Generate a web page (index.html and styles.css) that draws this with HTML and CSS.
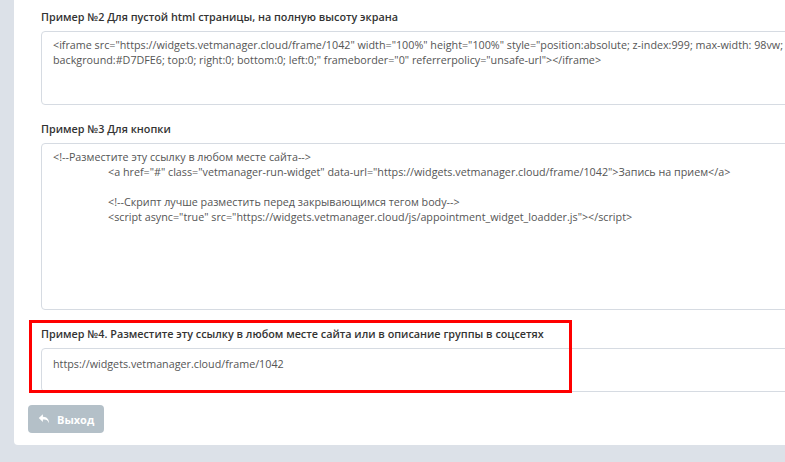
FILE: index.html
```html
<!DOCTYPE html>
<html lang="ru">
  <head>
    <meta charset="UTF-8" />
    <meta name="viewport" content="width=device-width, initial-scale=1.0" />
    <title>Виджет записи</title>
    <link rel="stylesheet" href="styles.css">
  </head>
  <body>
    <div class="page">
      <div class="panel">
        <div class="group">
          <label>Пример №2 Для пустой html страницы, на полную высоту экрана</label>
          <textarea class="code code-sm" readonly>&lt;iframe src="https://widgets.vetmanager.cloud/frame/1042" width="100%" height="100%" style="position:absolute; z-index:999; max-width: 98vw; background:#D7DFE6; top:0; right:0; bottom:0; left:0;" frameborder="0" referrerpolicy="unsafe-url"&gt;&lt;/iframe&gt;</textarea>
        </div>

        <div class="group">
          <label>Пример №3 Для кнопки</label>
          <textarea class="code code-lg" readonly>&lt;!--Разместите эту ссылку в любом месте сайта--&gt;
	&lt;a href="#" class="vetmanager-run-widget" data-url="https://widgets.vetmanager.cloud/frame/1042"&gt;Запись на прием&lt;/a&gt;

	&lt;!--Скрипт лучше разместить перед закрывающимся тегом body--&gt;
	&lt;script async="true" src="https://widgets.vetmanager.cloud/js/appointment_widget_loadder.js"&gt;&lt;/script&gt;</textarea>
        </div>

        <div class="group group-marked">
          <label>Пример №4. Разместите эту ссылку в любом месте сайта или в описание группы в соцсетях</label>
          <textarea class="code code-link" readonly>https://widgets.vetmanager.cloud/frame/1042</textarea>
          <div class="marker"></div>
        </div>

        <button class="btn-exit">
          <svg viewBox="0 0 16 16" width="12" height="12">
            <path d="M6.5 1.5 L1 6.8 L6.5 12 V8.8 H8.2 C11.2 8.8 13.2 10.2 14.8 13.8 C14.6 8.6 12.2 4.9 6.5 4.9 Z" fill="#fff" />
          </svg>
          Выход
        </button>
      </div>
    </div>
  </body>
</html>
```

FILE: styles.css
```css
body {
  margin: 0;
  padding: 0;
  background: #dce1e8;
  font-family: "Open Sans", "Noto Sans", sans-serif;
  overflow: hidden;
}

.page {
  padding: 0 0 17px 14px;
}

.panel {
  width: 820px;
  background: #fff;
  border-radius: 0 0 4px 4px;
  padding: 9px 0 12px 14px;
  box-sizing: border-box;
}

.group {
  margin: 0 0 16px 13px;
}
.group > label {
  display: block;
  font-size: 10.8px;
  font-weight: 600;
  line-height: 16px;
  color: #333;
  margin-bottom: 6px;
}

.code {
  display: block;
  box-sizing: border-box;
  width: 780px;
  margin: 0;
  border: 1px solid #d6dbe2;
  border-radius: 4px;
  padding: 6px 11px;
  font-family: "Open Sans", "Noto Sans", sans-serif;
  font-size: 10.75px;
  line-height: 15px;
  color: #555;
  background: #fff;
  resize: none;
  outline: none;
  tab-size: 55px;
}
.code-sm {
  height: 74px;
}
.code-lg {
  height: 167px;
}
.code-link {
  height: 44px;
  padding-top: 8px;
}

.group-marked {
  position: relative;
  margin-bottom: 13px;
}
.marker {
  position: absolute;
  top: -6px;
  left: -12px;
  width: 543px;
  height: 73px;
  box-sizing: border-box;
  border: 3px solid #f00;
  pointer-events: none;
}

.btn-exit {
  display: flex;
  align-items: center;
  gap: 7px;
  height: 28px;
  width: 76px;
  padding: 0 0 0 10px;
  border: none;
  border-radius: 4px;
  background: #b4c0c8;
  color: #fff;
  font-family: "Open Sans", "Noto Sans", sans-serif;
  font-size: 11px;
  font-weight: 700;
  cursor: pointer;
}
```
